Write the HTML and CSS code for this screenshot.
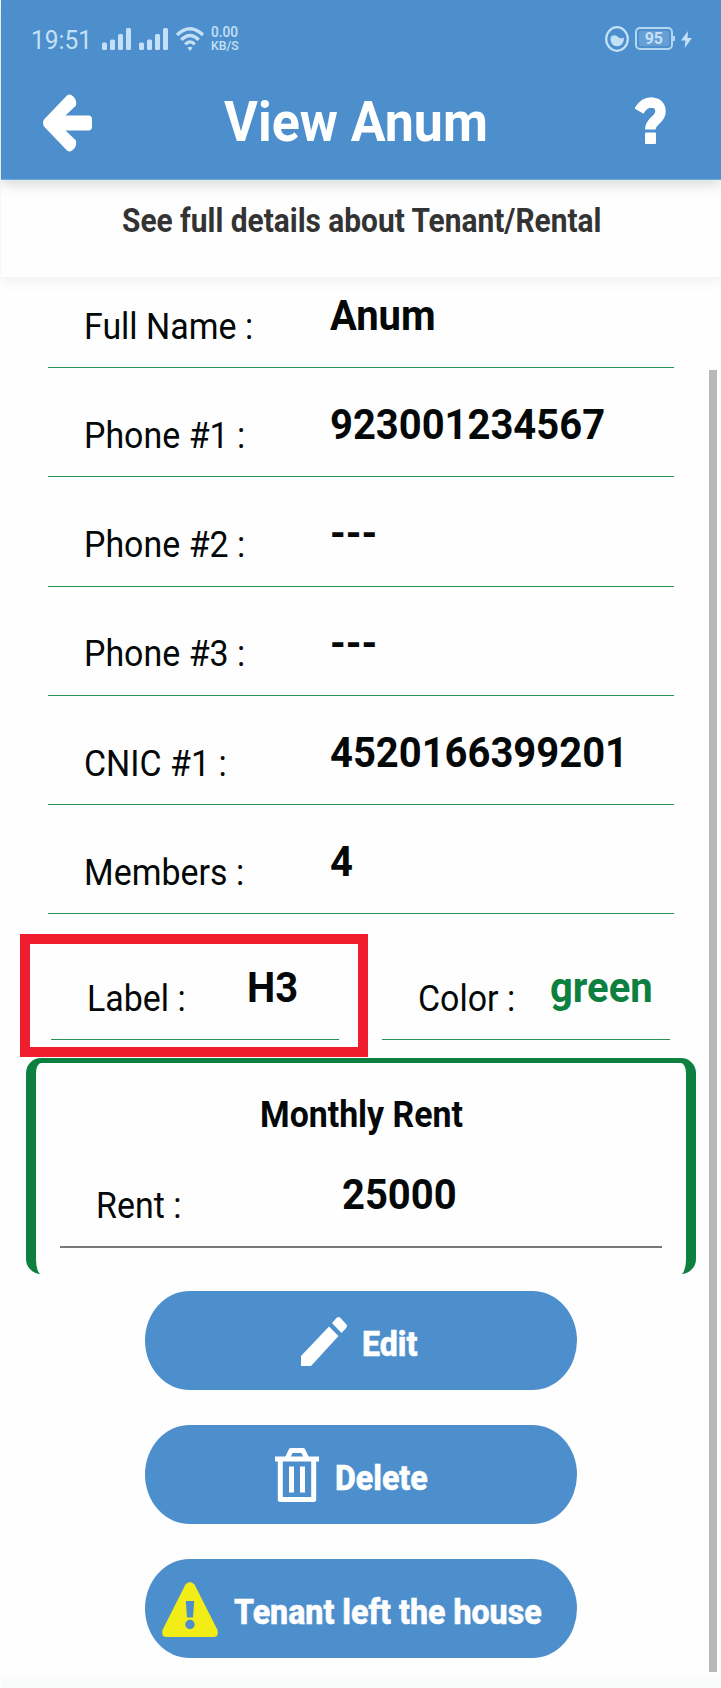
FILE: index.html
```html
<!DOCTYPE html>
<html lang="en">
<head>
<meta charset="utf-8">
<title>View Anum</title>
<link rel="stylesheet" href="styles.css">
</head>
<body>
<div class="screen">
  <header class="appbar">
    <div class="status">
      <span class="t clock">19:51</span>
      <svg class="signal" viewBox="0 0 29 22"><rect x="0" y="14.500" width="5" height="7.500" rx="1.500"/><rect x="8" y="11.500" width="5" height="10.500" rx="1.500"/><rect x="16" y="6" width="5" height="16" rx="1.500"/><rect x="24" y="0" width="5" height="22" rx="1.500"/></svg>
      <svg class="signal second" viewBox="0 0 29 22"><rect x="0" y="14.500" width="5" height="7.500" rx="1.500"/><rect x="8" y="11.500" width="5" height="10.500" rx="1.500"/><rect x="16" y="6" width="5" height="16" rx="1.500"/><rect x="24" y="0" width="5" height="22" rx="1.500"/></svg>
      <svg class="wifi" viewBox="0 0 28 24"><g fill="none" stroke="#c4e0f6" stroke-width="3.300"><path d="M1 8Q14-4.500 27 8"/><path d="M5.200 12.700Q14 4.200 22.800 12.700"/><path d="M9.200 17.400Q14 12.400 18.800 17.400"/></g><path d="M11.500 20.800q2.500-2 5 0L14 23.900z" fill="#c4e0f6"/></svg>
      <span class="speed"><span class="t rate">0.00</span><span class="t unit">KB/S</span></span>
      <svg class="saver" viewBox="0 0 24 26"><ellipse cx="12" cy="13" rx="10.800" ry="11.800" fill="none" stroke="#c4e0f6" stroke-width="2.200"/><path d="M5.500 12.500C6 9 10 8.500 12.500 10.500S16 13 18.700 11.500C19.500 16 16.500 20.200 12.300 20.200S5.300 17 5.500 12.500z" fill="#c4e0f6"/></svg>
      <span class="battery"><span class="charge"><span class="t pct">95</span></span></span>
      <svg class="bolt" viewBox="0 0 11 17"><path d="M7 0 0 9.600h4.500L3.700 17 11 7H6.500z" fill="#c4e0f6"/></svg>
    </div>
    <div class="titlebar">
      <svg class="back" viewBox="0 0 49 58"><path d="M29 1.500q5 3 4 10L22.500 21.500H45.500q3.500 0 3.500 4v7q0 4-3.500 4H22.500L33 46.500q1 7-4 10-2.500 2-5 0L1 32.500q-2-3.500 0-7L24 1.500q2.500-2 5 0z" fill="#fff"/></svg>
      <h1 class="t title">View Anum</h1>
      <svg class="help" viewBox="0 0 31 47"><path d="M4 14Q9 5.500 16 5.500 25.500 6 25.500 14.500C25.500 23.500 15.300 23 15.300 32.500" fill="none" stroke="#fff" stroke-width="10.500"/><rect x="10" y="35.500" width="11" height="11.500" rx="1" fill="#fff"/></svg>
    </div>
  </header>
  <div class="subhead"><span class="t subtitle">See full details about Tenant/Rental</span></div>
  <main class="details">
    <div class="row"><span class="t label">Full Name :</span><span class="t value">Anum</span></div>
    <div class="row"><span class="t label">Phone #1 :</span><span class="t value">923001234567</span></div>
    <div class="row"><span class="t label">Phone #2 :</span><span class="t value">---</span></div>
    <div class="row"><span class="t label">Phone #3 :</span><span class="t value">---</span></div>
    <div class="row"><span class="t label">CNIC #1 :</span><span class="t value">4520166399201</span></div>
    <div class="row"><span class="t label">Members :</span><span class="t value">4</span></div>
    <div class="pair">
      <div class="cell cell-label"><span class="t label">Label :</span><span class="t value">H3</span><div class="highlight"></div></div>
      <div class="cell cell-color"><span class="t label">Color :</span><span class="t value green">green</span></div>
    </div>
    <section class="rent">
      <h2 class="t rent-title">Monthly Rent</h2>
      <div class="rent-row"><span class="t label">Rent :</span><span class="t value">25000</span></div>
    </section>
    <div class="actions">
      <button class="btn edit"><svg viewBox="0 0 46 49"><path d="M0 39 28 9.500l9.500 9.500L10 49H0zM31 6l4.500-5q2-2 4 0l5.500 6q2 2 0 4.300L40.500 16z" fill="#fff"/></svg><span class="t btn-text">Edit</span></button>
      <button class="btn delete"><svg viewBox="0 0 44 54"><path d="M12 11 16 2.500H28L32 11" fill="none" stroke="#fff" stroke-width="5" stroke-linejoin="round"/><rect x="0" y="8.500" width="44" height="5" fill="#fff"/><path d="M5.300 12V51.500H38.700V12" fill="none" stroke="#fff" stroke-width="5" stroke-linejoin="round"/><path d="M16.500 18.500v26M27.500 18.500v26" stroke="#fff" stroke-width="5"/></svg><span class="t btn-text">Delete</span></button>
      <button class="btn leave"><svg viewBox="0 0 56 55"><path d="M23.500 2.500q4.500-5 9 0L55.500 48q1.500 7-4 7h-47Q-1 55 .5 48z" fill="#f3ed17"/><path d="M23.800 19h8.400l-1.200 16.500h-6z" fill="#4d8fcc"/><circle cx="28" cy="42.500" r="4.700" fill="#4d8fcc"/></svg><span class="t btn-text">Tenant left the house</span></button>
    </div>
    <div class="scrollbar"></div>
  </main>
  <footer class="foot"></footer>
</div>
</body>
</html>
```
FILE: styles.css
```css
* { box-sizing: border-box; }
body { margin: 0; background: #fefefe; font-family: Roboto, sans-serif; color: #040808; }
.screen { display: flex; flex-direction: column; width: 721px; height: 1688px; overflow: hidden; background: #fefefe; }
h1, h2 { margin: 0; }
svg { display: block; flex: none; }
/* Condensed text: glyphs keep their height and lose some width */
.t { display: block; flex: none; line-height: 1; white-space: nowrap; transform: scaleX(.94); transform-origin: 0 0; }

.appbar { position: relative; z-index: 2; flex: none; height: 180px; margin-left: 1px; background: #4d8fcc; color: #fff; box-shadow: 0 3px 14px rgba(40,60,50,.22); border-bottom: 1px solid #70a9db; }
.status { display: flex; height: 80px; padding: 26px 0 0 30px; color: #c4e0f6; }
.clock { width: 71px; margin-top: 1px; font-size: 26px; }
.signal { width: 29px; height: 22px; margin-top: 2px; fill: #c4e0f6; }
.signal.second { margin-left: 8px; }
.wifi { width: 28px; height: 24px; margin: 1px 0 0 8px; }
.speed { width: 33px; margin: 0 0 0 7px; }
.rate, .unit { font-weight: 500; }
.rate { font-size: 14.5px; line-height: 13px; }
.unit { font-size: 13px; line-height: 12px; margin-top: 1px; }
.saver { width: 24px; height: 26px; margin-left: 361px; }
.battery { position: relative; width: 38px; height: 23px; margin: 1px 0 0 6px; padding: 2px; border: 2px solid #b5d6f1; border-radius: 5px; }
.battery::after { content: ""; position: absolute; right: -4px; top: 7px; width: 2px; height: 5px; background: #b5d6f1; }
.charge { display: block; height: 15px; border-radius: 2px; background: #659fd6; }
.pct { font-size: 17px; font-weight: 700; padding-left: 6px; line-height: 15px; }
.bolt { width: 11px; height: 17px; margin: 5px 0 0 8px; }
.titlebar { display: flex; align-items: flex-start; padding-left: 42px; }
.back { width: 49px; height: 58px; margin-top: 14px; }
.title { width: 410px; margin: 14px 0 0 132px; font-size: 56px; font-weight: 700; transform: scaleX(.927); }
.help { width: 31px; height: 47px; margin: 17px 0 0 1px; }

.subhead { position: relative; z-index: 1; flex: none; height: 98px; margin-left: 1px; padding: 24.500px 0 0 121px; background: #fefefe; box-shadow: 0 3px 12px rgba(60,90,90,.08); border-bottom: 1px solid #f5f7f7; }
.subtitle { font-size: 32.500px; font-weight: 700; color: #333; transform: scaleX(.919); }

.details { position: relative; flex: none; height: 1398px; margin-top: -19px; padding: 0 47px 0 48px; }
.row { display: flex; height: 109.2px; border-bottom: 1.5px solid #279053; padding-left: 36px; width: 626px; }
.label { width: 246px; margin-top: 49.8px; font-size: 36.5px; transform: scaleX(.93); }
.value { margin-top: 36px; font-size: 42.5px; font-weight: 700; }
.pair { display: flex; gap: 43px; padding-left: 3px; }
.cell { position: relative; display: flex; width: 288px; height: 126.300px; border-bottom: 1.5px solid #279053; padding-left: 36px; }
.cell .label { margin-top: 67.3px; width: 160px; }
.cell .value { margin-top: 53.3px; }
.cell-color .label { width: 132px; }
.green { color: #0d8040; }
.highlight { position: absolute; left: -31px; top: 19.5px; width: 348px; height: 123px; border: 10px solid #f01d2e; }
.rent { width: 670px; height: 216px; margin: 17.300px 0 0 -22px; padding: 0 24px; border: 10px solid #0d8040; border-width: 5px 10px 0; border-radius: 15px; }
.rent-title { margin: 34.500px 0 0 200px; font-size: 36px; font-weight: 700; }
.rent-row { display: flex; height: 114.5px; width: 602px; border-bottom: 2px solid #777; padding-left: 36px; }
.rent-row .label { margin-top: 54.500px; }
.rent-row .value { margin-top: 40.500px; }

.actions { display: flex; flex-direction: column; gap: 34.5px; width: 432px; margin: 17px 0 0 97px; }
.btn { display: flex; height: 99.5px; padding: 0; border: 0; border-radius: 45px / 50px; background: #4d8fcc; color: #fff; font-family: inherit; }
.btn-text { font-size: 35px; font-weight: 800; margin-top: 36px; transform: scaleX(.918); -webkit-text-stroke: .5px #fff; }
.edit svg { width: 46px; height: 49px; margin: 26px 15px 0 156px; }
.delete svg { width: 44px; height: 54px; margin: 23px 16px 0 130px; }
.leave svg { width: 56px; height: 55px; margin: 23px 16px 0 17px; }
.scrollbar { position: absolute; left: 709px; top: 111px; width: 8px; height: 1302px; background: #b8b8b8; }
.foot { height: 12px; margin-left: 1px; margin-top: 19px; background: #fafcfb; }
```
